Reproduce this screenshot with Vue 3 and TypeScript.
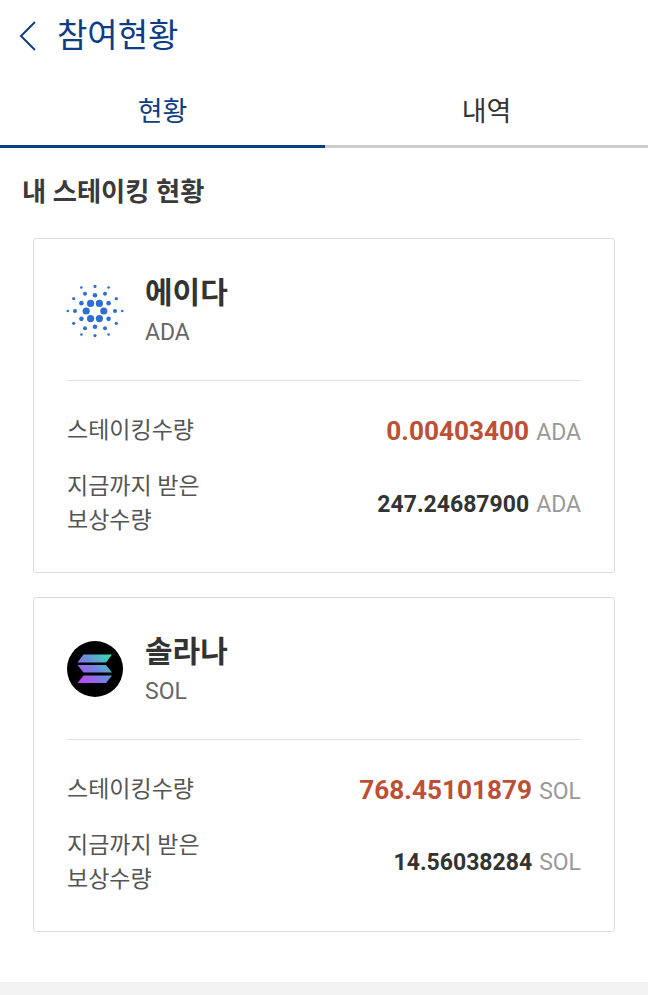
<script setup lang="ts">
interface Row { label: string[]; value: string; highlight: boolean }
interface Coin { name: string; symbol: string; logo: 'ada' | 'sol'; rows: Row[] }

const coins: Coin[] = [
  {
    name: '에이다', symbol: 'ADA', logo: 'ada',
    rows: [
      { label: ['스테이킹수량'], value: '0.00403400', highlight: true },
      { label: ['지금까지 받은', '보상수량'], value: '247.24687900', highlight: false },
    ],
  },
  {
    name: '솔라나', symbol: 'SOL', logo: 'sol',
    rows: [
      { label: ['스테이킹수량'], value: '768.45101879', highlight: true },
      { label: ['지금까지 받은', '보상수량'], value: '14.56038284', highlight: false },
    ],
  },
]

const rings = [
  { r: 8.8, a: 0, s: 3.6 },
  { r: 15.7, a: 30, s: 2.3 },
  { r: 20, a: 0, s: 2 },
  { r: 24.6, a: 30, s: 1.6 },
  { r: 27.2, a: 0, s: 1.3 },
]
const adaDots = rings.flatMap((ring) =>
  [0, 1, 2, 3, 4, 5].map((i) => {
    const t = ((ring.a + i * 60) * Math.PI) / 180
    return { x: 29 + ring.r * Math.cos(t), y: 29 + ring.r * Math.sin(t), s: ring.s }
  }),
)
</script>

<template>
  <div class="page">
    <header class="top">
      <svg class="back" width="20" height="32" viewBox="0 0 20 32" fill="none">
        <path d="M17 2 L3 16 L17 30" stroke="#0f3d85" stroke-width="2" />
      </svg>
      <h1>참여현황</h1>
    </header>

    <nav class="tabs">
      <div class="tab active">현황</div>
      <div class="tab">내역</div>
    </nav>

    <h2>내 스테이킹 현황</h2>

    <section class="cards">
      <article v-for="coin in coins" :key="coin.symbol" class="card">
        <div class="coin">
          <svg v-if="coin.logo === 'ada'" class="logo" width="58" height="58" viewBox="0 0 58 58">
            <circle v-for="(d, i) in adaDots" :key="i" :cx="d.x" :cy="d.y" :r="d.s" fill="#2f6fd0" />
          </svg>
          <svg v-else class="logo" width="58" height="58" viewBox="0 0 58 58">
            <defs>
              <linearGradient id="solGrad" gradientUnits="userSpaceOnUse" x1="44" y1="12" x2="14" y2="45">
                <stop offset="0" stop-color="#2fe6a8" />
                <stop offset="0.5" stop-color="#6f86e0" />
                <stop offset="1" stop-color="#cc3cf5" />
              </linearGradient>
            </defs>
            <circle cx="29" cy="29" r="28" fill="#000" />
            <g fill="url(#solGrad)">
              <path d="M17.5 14.5 H46 L40 22.5 H11.5 Z" />
              <path d="M11.5 25 H40 L46 32.5 H17.5 Z" />
              <path d="M17.5 35.5 H46 L40 43 H11.5 Z" />
            </g>
          </svg>
          <div class="coin-text">
            <div class="coin-name">{{ coin.name }}</div>
            <div class="coin-symbol">{{ coin.symbol }}</div>
          </div>
        </div>
        <div class="rows">
          <div v-for="row in coin.rows" :key="row.label[0]" class="row">
            <div class="label">
              <div v-for="line in row.label" :key="line">{{ line }}</div>
            </div>
            <div class="amount">
              <strong :class="{ hot: row.highlight, big: row.highlight }">{{ row.value }}</strong>
              <span>{{ coin.symbol }}</span>
            </div>
          </div>
        </div>
      </article>
    </section>

    <div class="foot"></div>
  </div>
</template>

<style>
html, body { margin: 0; background: #fff; }
</style>

<style scoped>
.page {
  width: 648px;
  height: 995px;
  overflow: hidden;
  display: flex;
  flex-direction: column;
  font-family: Roboto, "Noto Sans CJK KR", sans-serif;
  color: #333;
}
.top {
  height: 70px;
  display: flex;
  align-items: flex-start;
  padding: 16px 0 0 18px;
  box-sizing: border-box;
}
.back { margin-top: 4px; }
h1 {
  margin: 2px 0 0 19px;
  font-size: 33px;
  line-height: 36px;
  font-weight: 400;
  color: #0f3d85;
}
.tabs { display: flex; height: 78px; }
.tab {
  flex: 1;
  height: 78px;
  box-sizing: border-box;
  border-bottom: 3px solid #ccc;
  text-align: center;
  font-size: 27px;
  line-height: 84px;
  color: #333;
}
.tab.active { flex: 0 0 325px; color: #0f3d85; border-bottom-color: #0f3d85; }
h2 {
  margin: 27px 0 0 22px;
  font-size: 26.3px;
  line-height: 34px;
  font-weight: 700;
  color: #3a3a3a;
}
.cards {
  display: flex;
  flex-direction: column;
  gap: 23.5px;
  margin: 29px 33px 0;
}
.card {
  height: 335px;
  box-sizing: border-box;
  border: 1px solid #ddd;
  border-radius: 3px;
  padding: 0 33px;
}
.coin {
  height: 142px;
  display: flex;
  align-items: center;
  gap: 21px;
  border-bottom: 1px solid #e2e2e2;
  box-sizing: border-box;
}
.logo { margin-left: -1px; margin-top: 2px; flex: none; }
.coin-text { margin-top: 4px; }
.coin-name { font-size: 30px; line-height: 38px; font-weight: 700; color: #333; }
.coin-symbol { font-size: 23px; line-height: 32px; margin-top: 5px; color: #666; }
.rows { padding-top: 33px; display: flex; flex-direction: column; gap: 22px; }
.row { display: flex; justify-content: space-between; align-items: center; }
.label { font-size: 23px; line-height: 34px; color: #555; }
.amount { display: flex; align-items: baseline; gap: 7px; }
.amount strong { font-size: 23px; font-weight: 700; color: #333; }
.amount strong.big { font-size: 26.2px; }
.amount strong.hot { color: #bd4f35; }
.amount span { font-size: 23px; color: #999; }
.foot { margin-top: auto; height: 13px; background: #f3f3f3; }
</style>
